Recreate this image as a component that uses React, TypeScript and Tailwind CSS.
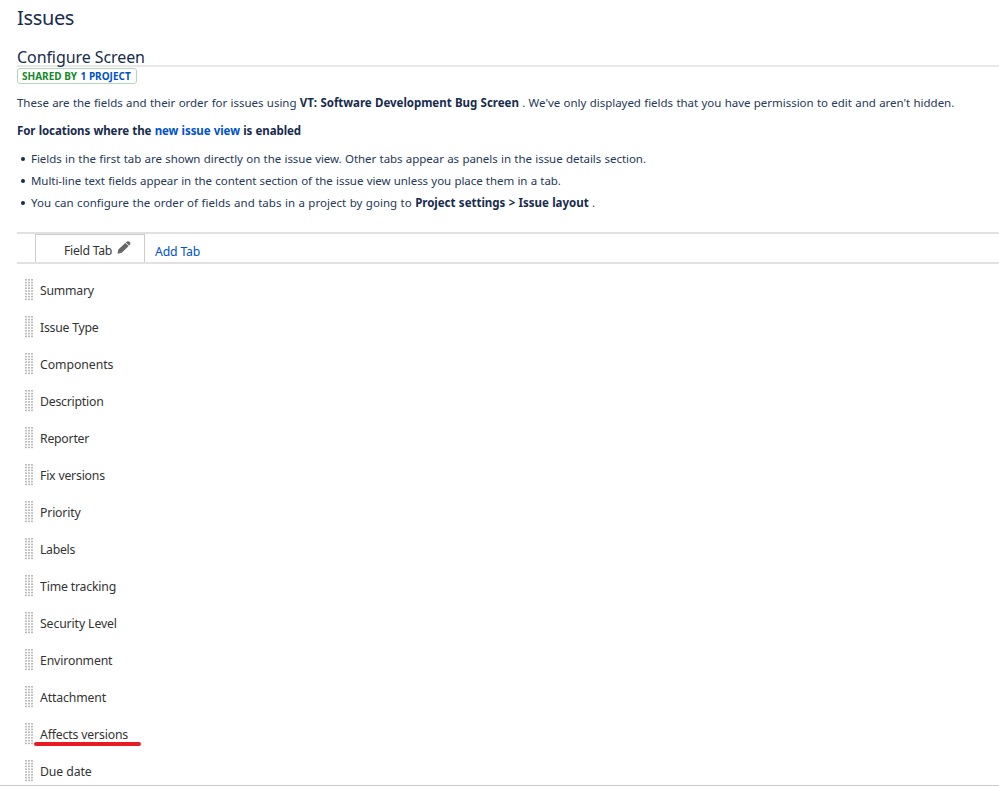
const fields = [
  { name: 'Summary', track: 'tracking-[-0.23px]' },
  { name: 'Issue Type', track: 'tracking-[-0.23px]' },
  { name: 'Components', track: 'tracking-[-0.05px]' },
  { name: 'Description', track: 'tracking-[-0.22px]' },
  { name: 'Reporter', track: 'tracking-[-0.23px]' },
  { name: 'Fix versions', track: 'tracking-[-0.2px]' },
  { name: 'Priority', track: 'tracking-[-0.17px]' },
  { name: 'Labels', track: 'tracking-[-0.3px]' },
  { name: 'Time tracking', track: 'tracking-[-0.17px]' },
  { name: 'Security Level', track: 'tracking-[-0.12px]' },
  { name: 'Environment', track: 'tracking-[-0.14px]' },
  { name: 'Attachment', track: 'tracking-[-0.14px]' },
  { name: 'Affects versions', track: 'tracking-[-0.16px]', marked: true },
  { name: 'Due date', track: 'tracking-[-0.1px]' },
];

const notes = [
  {
    text: 'Fields in the first tab are shown directly on the issue view. Other tabs appear as panels in the issue details section.',
    style: 'h-[22px] tracking-[-0.05px]',
  },
  {
    text: 'Multi-line text fields appear in the content section of the issue view unless you place them in a tab.',
    style: 'h-[21px] tracking-[-0.07px]',
  },
  {
    text: 'You can configure the order of fields and tabs in a project by going to ',
    style: 'h-[23px] tracking-[0.03px]',
    path: 'Project settings > Issue layout',
  },
];

function Grip() {
  return (
    <svg width="8" height="22" viewBox="0 0 8 22" className="block shrink-0">
      {[0, 2.8, 5.6, 8.4, 11.2, 14, 16.8, 19.6].map((y) =>
        [0, 3, 6].map((x) => <rect key={`${x}-${y}`} x={x} y={y} width="2" height="1.6" fill="#bcbcbc" />),
      )}
    </svg>
  );
}

function Pencil() {
  return (
    <svg width="14" height="13" viewBox="0 0 14 13" className="block" fill="#666">
      <path d="M.5 12.7 1.3 8.6 8.3 1.9 11.7 5.1 4.7 11.7ZM8.8 1.4 10 .4Q11.4-.3 12.6.8 13.8 2 13.2 3.3L12.2 4.6Z" />
    </svg>
  );
}

export default function App() {
  return (
    <div className="h-[786px] w-full overflow-hidden border-b border-[#c8c8c8] bg-white pl-[17px] font-['Noto_Sans',sans-serif] text-[11.5px] text-[#253858] whitespace-nowrap">
      <h1 className="h-[36px] text-[20px] leading-[35px] tracking-[-0.35px] text-[#172b4d]">Issues</h1>
      <h2 className="mt-[10px] h-[21px] border-b-2 border-[#e8e8e8] text-[16px] leading-[22px] tracking-[-0.08px] text-[#172b4d]">Configure Screen</h2>
      <div className="mt-px flex h-[16px] w-[120px] items-center gap-[3.5px] rounded-[3px] border border-[#b2d8b9] pl-[4px] text-[10px] leading-[14px] font-bold text-[#14892c]">
        <span>SHARED BY</span>
        <a className="text-[#0052cc]">1 PROJECT</a>
      </div>
      <p className="mt-[10px] leading-[18px] [word-spacing:0.4px]">
        <span className="tracking-[-0.03px]">These are the fields and their order for issues using </span>
        <b className="tracking-[-0.03px] text-[#172b4d]">VT: Software Development Bug Screen</b>
        <span className="tracking-[-0.03px]"> . We've only displayed fields that you have permission to edit and aren't hidden.</span>
      </p>
      <p className="mt-[10px] leading-[18px] font-bold tracking-[-0.09px] text-[#172b4d] [word-spacing:0.4px]">
        For locations where the <a className="text-[#0052cc]">new issue view</a> is enabled
      </p>
      <ul className="mt-[8px] mb-[18px] leading-[22px] [word-spacing:0.4px]">
        {notes.map((note) => (
          <li key={note.text} className={`flex items-center ${note.style}`}>
            <i className="mr-[6px] ml-[4px] size-[4px] rounded-full bg-[#172b4d]" />
            <span>
              {note.text}
              {note.path && (
                <>
                  <b className="tracking-[-0.02px] text-[#172b4d]">{note.path}</b> .
                </>
              )}
            </span>
          </li>
        ))}
      </ul>
      <div className="flex h-[32px] border-y-2 border-[#dfe1e5] pl-[18px] text-[12.25px]">
        <div className="flex h-[28px] w-[110px] border border-b-0 border-[#ccc] bg-white pl-[28px] text-[#333]">
          <span className="w-[53px] leading-[32px] tracking-[-0.27px]">Field Tab</span>
          <span className="pt-[6px]"><Pencil /></span>
        </div>
        <a className="pl-[10px] leading-[36px] tracking-[-0.16px] text-[#0052cc]">Add Tab</a>
      </div>
      <ul className="mt-[7px] text-[12.25px] text-[#333]">
        {fields.map((f) => (
          <li key={f.name} className="flex h-[37px] items-center pl-[8px]">
            <Grip />
            <span className={`relative ml-[7px] pt-[2px] leading-[18px] ${f.track}`}>
              {f.name}
              {f.marked && <i className="absolute top-[18px] left-[-6px] h-[4px] w-[107px] rounded-full bg-[#e81b23]" />}
            </span>
          </li>
        ))}
      </ul>
    </div>
  );
}
